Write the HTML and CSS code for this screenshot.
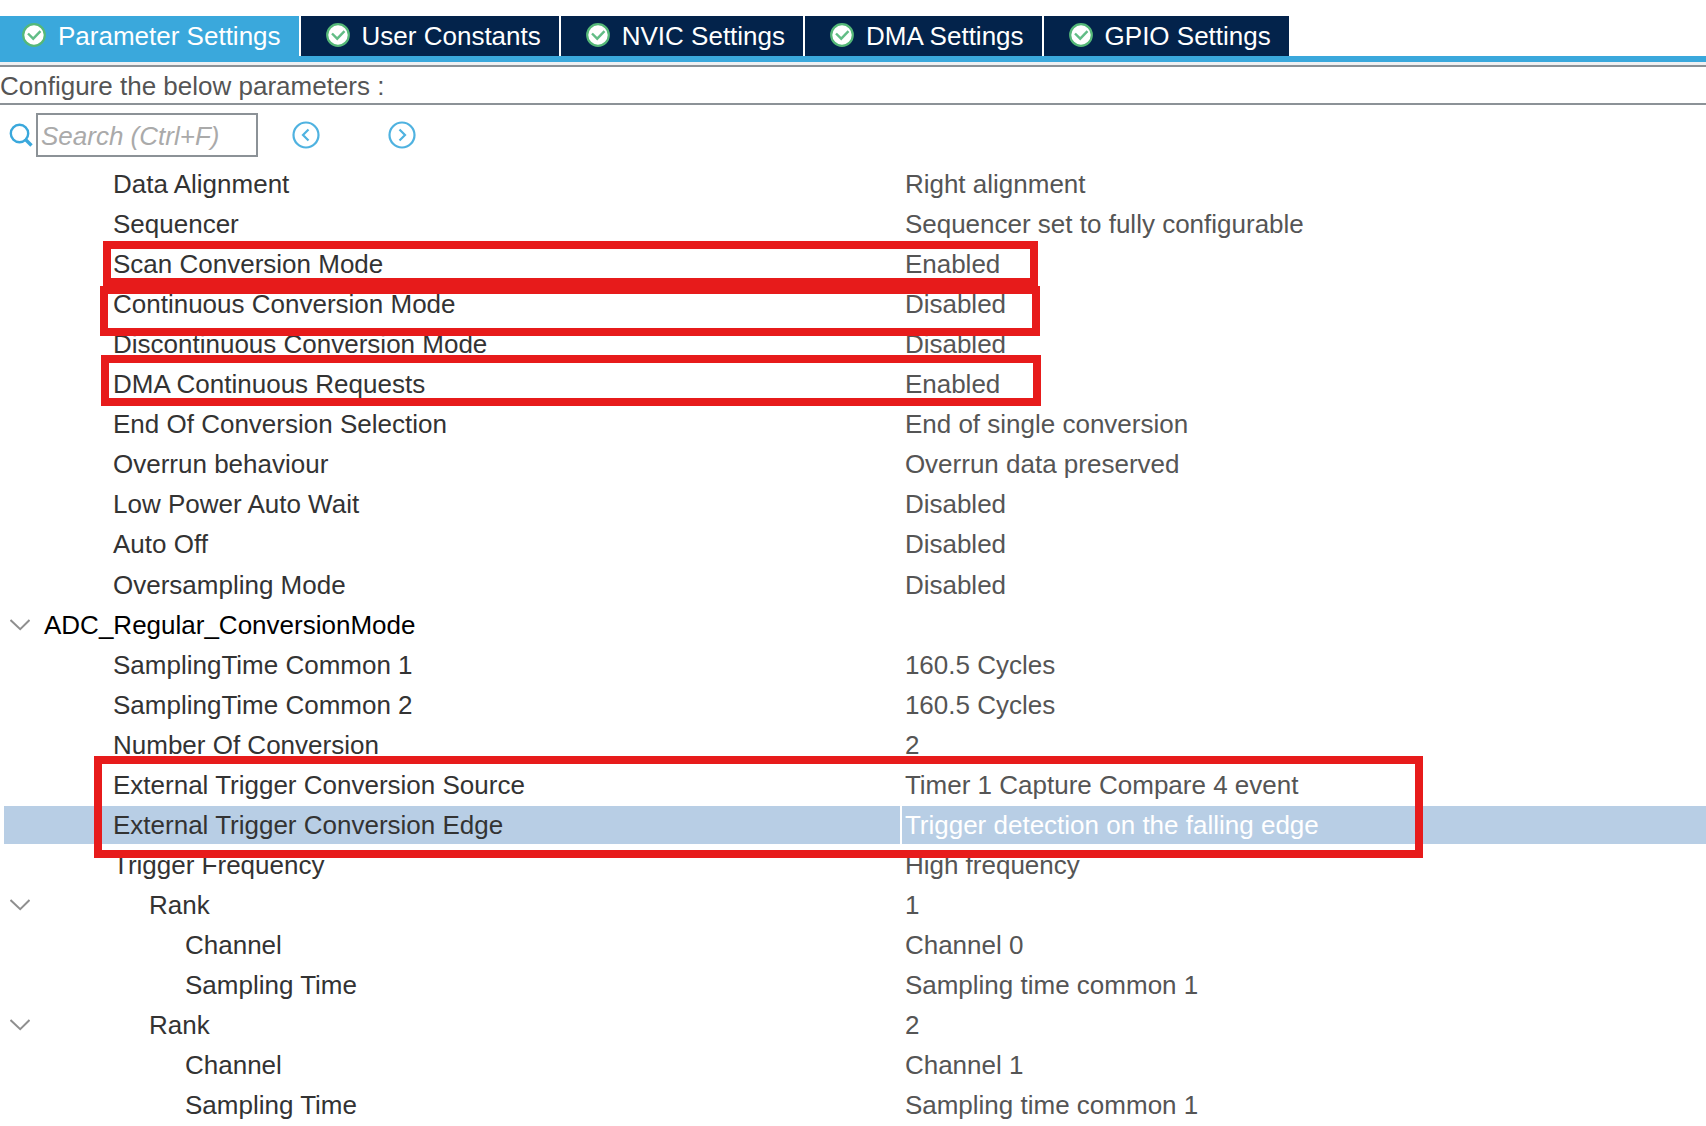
FILE: index.html
```html
<!DOCTYPE html>
<html lang="en">
<head>
<meta charset="utf-8">
<title>ADC Parameter Settings</title>
<link rel="stylesheet" href="styles.css">
</head>
<body>
<svg class="defs" aria-hidden="true">
  <symbol id="ok" viewBox="0 0 24 24">
    <circle cx="12" cy="12" r="10.8" fill="#fff" stroke="#55b878" stroke-width="2.2"/>
    <path d="M6 10.500l5.200 5.200 7.300-7.500" fill="none" stroke="#62bd86" stroke-width="2.4"/>
  </symbol>
  <symbol id="chevron" viewBox="0 0 20 12">
    <path d="M0.5 1l9.7 9.2L19.5 1" fill="none" stroke="#8f8f8f" stroke-width="2"/>
  </symbol>
</svg>

<nav class="tabs" role="tablist">
  <button class="tab active" role="tab" aria-selected="true"><svg class="ok"><use href="#ok"/></svg>Parameter Settings</button>
  <button class="tab" role="tab"><svg class="ok"><use href="#ok"/></svg>User Constants</button>
  <button class="tab" role="tab"><svg class="ok"><use href="#ok"/></svg>NVIC Settings</button>
  <button class="tab" role="tab"><svg class="ok"><use href="#ok"/></svg>DMA Settings</button>
  <button class="tab" role="tab"><svg class="ok"><use href="#ok"/></svg>GPIO Settings</button>
</nav>

<main>
  <p class="caption">Configure the below parameters :</p>

  <div class="toolbar">
    <label class="search-label" for="search" aria-label="Search">
      <svg width="24" height="24" viewBox="0 0 24 24" fill="none" stroke="#3aa8dc"><circle cx="10.500" cy="10.500" r="8.700" stroke-width="2.400"/><path d="M16 16l6.500 6.500" stroke-width="3.400"/></svg>
    </label>
    <input id="search" class="search" type="text" placeholder="Search (Ctrl+F)">
    <button class="step" aria-label="Previous match">
      <svg width="28" height="28" viewBox="0 0 28 28" fill="none" stroke="#4fb2e0" stroke-width="2.200"><circle cx="14" cy="14" r="12.500"/><path d="M16.500 8.500L11 14l5.500 5.500"/></svg>
    </button>
    <button class="step" aria-label="Next match">
      <svg width="28" height="28" viewBox="0 0 28 28" fill="none" stroke="#4fb2e0" stroke-width="2.200"><circle cx="14" cy="14" r="12.500"/><path d="M11.500 8.500L17 14l-5.500 5.500"/></svg>
    </button>
  </div>

  <div class="tree">
    <table class="params">
      <colgroup><col class="names"><col></colgroup>
      <tbody>
        <tr><th scope="row">Data Alignment</th><td>Right alignment</td></tr>
        <tr><th scope="row">Sequencer</th><td>Sequencer set to fully configurable</td></tr>
        <tr><th scope="row">Scan Conversion Mode</th><td>Enabled</td></tr>
        <tr><th scope="row">Continuous Conversion Mode</th><td>Disabled</td></tr>
        <tr><th scope="row">Discontinuous Conversion Mode</th><td>Disabled</td></tr>
        <tr><th scope="row">DMA Continuous Requests</th><td>Enabled</td></tr>
        <tr><th scope="row">End Of Conversion Selection</th><td>End of single conversion</td></tr>
        <tr><th scope="row">Overrun behaviour</th><td>Overrun data preserved</td></tr>
        <tr><th scope="row">Low Power Auto Wait</th><td>Disabled</td></tr>
        <tr><th scope="row">Auto Off</th><td>Disabled</td></tr>
        <tr class="last"><th scope="row">Oversampling Mode</th><td>Disabled</td></tr>
      </tbody>
      <tbody>
        <tr class="group"><th scope="row"><svg class="chevron"><use href="#chevron"/></svg>ADC_Regular_ConversionMode</th><td></td></tr>
        <tr><th scope="row">SamplingTime Common 1</th><td>160.5 Cycles</td></tr>
        <tr><th scope="row">SamplingTime Common 2</th><td>160.5 Cycles</td></tr>
        <tr><th scope="row">Number Of Conversion</th><td>2</td></tr>
        <tr><th scope="row">External Trigger Conversion Source</th><td>Timer 1 Capture Compare 4 event</td></tr>
        <tr class="selected"><th scope="row">External Trigger Conversion Edge</th><td>Trigger detection on the falling edge</td></tr>
        <tr><th scope="row">Trigger Frequency</th><td>High frequency</td></tr>
        <tr class="rank"><th scope="row"><svg class="chevron"><use href="#chevron"/></svg>Rank</th><td>1</td></tr>
        <tr class="leaf"><th scope="row">Channel</th><td>Channel 0</td></tr>
        <tr class="leaf"><th scope="row">Sampling Time</th><td>Sampling time common 1</td></tr>
        <tr class="rank"><th scope="row"><svg class="chevron"><use href="#chevron"/></svg>Rank</th><td>2</td></tr>
        <tr class="leaf"><th scope="row">Channel</th><td>Channel 1</td></tr>
        <tr class="leaf"><th scope="row">Sampling Time</th><td>Sampling time common 1</td></tr>
      </tbody>
    </table>
    <div class="mark mark-scan"></div>
    <div class="mark mark-continuous"></div>
    <div class="mark mark-dma"></div>
    <div class="mark mark-trigger"></div>
  </div>
</main>
</body>
</html>
```
FILE: styles.css
```css
* { box-sizing: border-box; }

body {
  margin: 0;
  background: #fff;
  color: #333;
  font: 26px/30px "Liberation Sans", Arial, sans-serif;
}

button, input { font: inherit; }

.defs { position: absolute; width: 0; height: 0; }

/* Tabs */
.tabs {
  display: flex;
  gap: 2px;
  padding-top: 16px;
  border-bottom: 6px solid #3aa8dc;
}

.tab {
  display: flex;
  align-items: center;
  gap: 12px;
  height: 40px;
  padding: 0 18px 0 25px;
  border: 0;
  background: #03234b;
  color: #fff;
  white-space: nowrap;
}

.tab.active {
  padding-left: 22px;
  background: #3aa8dc;
}

.ok { width: 24px; height: 24px; margin-bottom: 2px; }

/* Caption and search */
.caption {
  margin: 0;
  padding: 4px 0 2px;
  border-top: 2px solid #8c9297;
  border-bottom: 2px solid #8c9297;
  color: #555;
}

main {
  border-top: 3px solid #eff0f2;
}

.toolbar {
  display: flex;
  align-items: center;
  padding: 8px 0 8px 9px;
}

.search-label { display: flex; width: 27px; }

.search {
  width: 222px;
  height: 44px;
  margin-right: 34px;
  padding: 2px 3px 0;
  border: 2px solid #8c9297;
  outline: 0;
  background: #fff;
  color: #333;
}

.search::placeholder { color: #aaa; font-style: italic; opacity: 1; }

.step {
  display: flex;
  margin-right: 68px;
  padding: 0;
  border: 0;
  background: none;
}

/* Parameter tree */
.tree {
  position: relative;
  padding-left: 2px;
  overflow: hidden;
}

/* The outer spacing on the right is pushed past the edge */
.params {
  width: calc(100% + 2px);
  border-spacing: 2px 0;
  table-layout: fixed;
}

.names { width: 52.7%; }

.params th, .params td {
  height: 40px;
  padding: 0 3px;
  border-bottom: 2px solid #fff;
  font-weight: normal;
  text-align: left;
  white-space: nowrap;
}

.params th { position: relative; padding-left: 109px; }
.params td { color: #555; }
.params .last th, .params .last td { height: 41px; padding-top: 1px; }
.params .group th { padding-left: 40px; color: #000; }
.params .rank th { padding-left: 145px; }
.params .leaf th { padding-left: 181px; }

.params .selected th, .params .selected td { background: #b8cee5; }
.params .selected td { color: #fff; }

.chevron {
  position: absolute;
  top: 13px;
  left: 6px;
  width: 20px;
  height: 12px;
}

/* Highlight frames drawn over the rows */
.mark {
  position: absolute;
  border: 8px solid #e71b1b;
  pointer-events: none;
}

.mark-scan { top: 76px; left: 103px; width: calc(52% + 48px); height: 45px; }
.mark-continuous { top: 121px; left: 100px; width: calc(52% + 53px); height: 50px; }
.mark-dma { top: 190px; left: 101px; width: calc(52% + 53px); height: 51px; }
.mark-trigger { top: 591px; left: 94px; width: calc(75% + 49px); height: 102px; }
```
